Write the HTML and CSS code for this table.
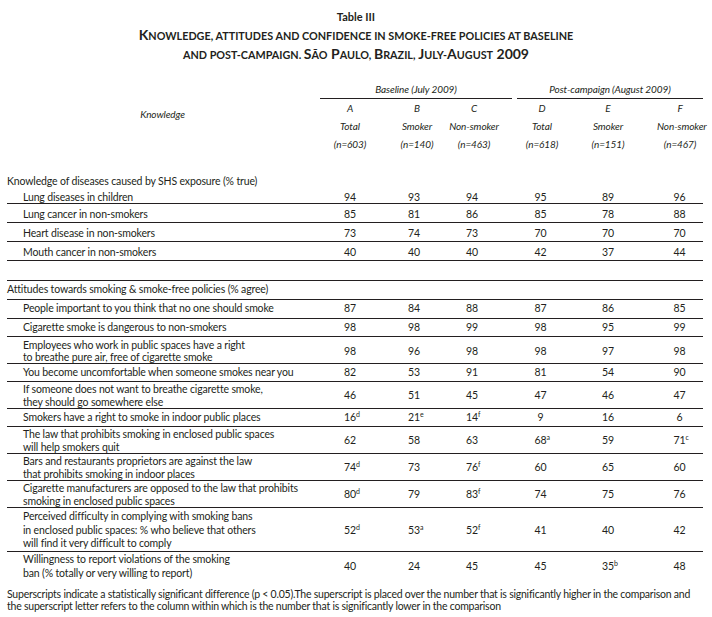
FILE: index.html
```html
<!DOCTYPE html>
<html lang="en">
<head>
<meta charset="utf-8">
<title>Table III</title>
<link rel="stylesheet" href="styles.css">
</head>
<body>
<div class="page">
  <div class="caption">
    <div class="table-no">Table III</div>
    <div class="title">K<span class="sc">nowledge, attitudes and confidence in smoke-free policies at baseline</span><br><span class="sc">and post-campaign. </span>S<span class="sc">ão</span> P<span class="sc">aulo, </span>B<span class="sc">razil, </span>J<span class="sc">uly-</span>A<span class="sc">ugust</span> 2009</div>
  </div>
  <table class="data">
    <colgroup>
      <col class="c-label"><col class="c-a"><col class="c-b"><col class="c-c"><col class="c-d"><col class="c-e"><col class="c-f">
    </colgroup>
    <thead>
      <tr class="group-row">
        <th rowspan="4" class="knowledge">Knowledge</th>
        <th colspan="3"><div class="group g-base">Baseline (July 2009)</div></th>
        <th colspan="3"><div class="group g-post">Post-campaign (August 2009)</div></th>
      </tr>
      <tr class="sub"><th>A</th><th>B</th><th>C</th><th>D</th><th>E</th><th>F</th></tr>
      <tr class="sub"><th>Total</th><th>Smoker</th><th>Non-smoker</th><th>Total</th><th>Smoker</th><th>Non-smoker</th></tr>
      <tr class="sub"><th>(n=603)</th><th>(n=140)</th><th>(n=463)</th><th>(n=618)</th><th>(n=151)</th><th>(n=467)</th></tr>
    </thead>
    <tbody>
      <tr class="spacer"><td colspan="7"></td></tr>
      <tr class="section"><td colspan="7">Knowledge of diseases caused by SHS exposure (% true)</td></tr>
      <tr class="row first"><td class="label">Lung diseases in children</td><td>94</td><td>93</td><td>94</td><td>95</td><td>89</td><td>96</td></tr>
      <tr class="row tall"><td class="label">Lung cancer in non-smokers</td><td>85</td><td>81</td><td>86</td><td>85</td><td>78</td><td>88</td></tr>
      <tr class="row tall"><td class="label">Heart disease in non-smokers</td><td>73</td><td>74</td><td>73</td><td>70</td><td>70</td><td>70</td></tr>
      <tr class="row tall"><td class="label">Mouth cancer in non-smokers</td><td>40</td><td>40</td><td>40</td><td>42</td><td>37</td><td>44</td></tr>
      <tr class="gap"><td colspan="7"></td></tr>
      <tr class="section ruled"><td colspan="7">Attitudes towards smoking &amp; smoke-free policies (% agree)</td></tr>
      <tr class="row mid"><td class="label">People important to you think that no one should smoke</td><td>87</td><td>84</td><td>88</td><td>87</td><td>86</td><td>85</td></tr>
      <tr class="row"><td class="label">Cigarette smoke is dangerous to non-smokers</td><td>98</td><td>98</td><td>99</td><td>98</td><td>95</td><td>99</td></tr>
      <tr class="row two low"><td class="label">Employees who work in public spaces have a right<br>to breathe pure air, free of cigarette smoke</td><td>98</td><td>96</td><td>98</td><td>98</td><td>97</td><td>98</td></tr>
      <tr class="row"><td class="label">You become uncomfortable when someone smokes near you</td><td>82</td><td>53</td><td>91</td><td>81</td><td>54</td><td>90</td></tr>
      <tr class="row two"><td class="label">If someone does not want to breathe cigarette smoke,<br>they should go somewhere else</td><td>46</td><td>51</td><td>45</td><td>47</td><td>46</td><td>47</td></tr>
      <tr class="row"><td class="label">Smokers have a right to smoke in indoor public places</td><td>16<sup>d</sup></td><td>21<sup>e</sup></td><td>14<sup>f</sup></td><td>9</td><td>16</td><td>6</td></tr>
      <tr class="row two"><td class="label">The law that prohibits smoking in enclosed public spaces<br>will help smokers quit</td><td>62</td><td>58</td><td>63</td><td>68<sup>a</sup></td><td>59</td><td>71<sup>c</sup></td></tr>
      <tr class="row two"><td class="label">Bars and restaurants proprietors are against the law<br>that prohibits smoking in indoor places</td><td>74<sup>d</sup></td><td>73</td><td>76<sup>f</sup></td><td>60</td><td>65</td><td>60</td></tr>
      <tr class="row two"><td class="label">Cigarette manufacturers are opposed to the law that prohibits<br>smoking in enclosed public spaces</td><td>80<sup>d</sup></td><td>79</td><td>83<sup>f</sup></td><td>74</td><td>75</td><td>76</td></tr>
      <tr class="row three"><td class="label">Perceived difficulty in complying with smoking bans<br>in enclosed public spaces: % who believe that others<br>will find it very difficult to comply</td><td>52<sup>d</sup></td><td>53<sup>a</sup></td><td>52<sup>f</sup></td><td>41</td><td>40</td><td>42</td></tr>
      <tr class="row last"><td class="label">Willingness to report violations of the smoking<br>ban (% totally or very willing to report)</td><td>40</td><td>24</td><td>45</td><td>45</td><td>35<sup>b</sup></td><td>48</td></tr>
    </tbody>
  </table>
  <p class="note">Superscripts indicate a statistically significant difference (p &lt; 0.05).The superscript is placed over the number that is significantly higher in the comparison and<br>the superscript letter refers to the column within which is the number that is significantly lower in the comparison</p>
</div>
</body>
</html>
```
FILE: styles.css
```css
html, body {
  margin: 0;
  padding: 0;
  background: #ffffff;
}

body {
  font-family: Lato, "Open Sans", "Liberation Sans", sans-serif;
  color: #231f20;
}

.page {
  width: 712px;
  padding: 0 0 0 7px;
  box-sizing: border-box;
}

.caption {
  text-align: center;
  padding-top: 8px;
  padding-right: 7px;
}

.table-no {
  font-weight: 700;
  font-size: 11px;
  line-height: 18px;
}

.title {
  font-weight: 700;
  font-size: 14px;
  line-height: 18px;
}

.title .sc {
  font-size: 10.8px;
  text-transform: uppercase;
}

.data {
  margin-top: 16px;
  width: 696px;
  border-collapse: separate;
  border-spacing: 0;
  table-layout: fixed;
  font-size: 10.5px;
  letter-spacing: -0.15px;
}

.c-label { width: 311px; }
.c-a { width: 64px; }
.c-b { width: 64px; }
.c-c { width: 68px; }
.c-d { width: 61px; }
.c-e { width: 66px; }
.c-f { width: 62px; }

.data th {
  font-weight: 400;
  font-style: italic;
  font-size: 10px;
  letter-spacing: -0.1px;
  padding: 0;
  line-height: 18px;
  text-align: center;
  white-space: nowrap;
}

.data th.knowledge {
  vertical-align: middle;
  padding-bottom: 5px;
}

.group {
  border-bottom: 1px solid #231f20;
}

.g-base { margin: 0 2px; }
.g-post { margin: 0 0 0 3px; }

.sub th:nth-child(2) { padding-left: 6px; }
.sub th:nth-child(3) { padding-right: 12px; }
.sub th:nth-child(4) { padding-right: 5px; }
.sub th:nth-child(6) { padding-left: 16px; }

.data td {
  padding: 0;
  text-align: center;
  white-space: nowrap;
}

.spacer td {
  padding-top: 22px;
}

.section td {
  text-align: left;
  line-height: 13px;
}

.section.ruled td {
  line-height: 15px;
  padding-top: 1px;
  padding-bottom: 2px;
  border-bottom: 1px solid #231f20;
}

.gap td {
  padding-top: 19px;
  border-bottom: 1px solid #231f20;
}

/* row geometry: only vertical padding is set per variant */
.row td {
  line-height: 13px;
  padding-top: 2px;
  padding-bottom: 2px;
  border-bottom: 1px solid #231f20;
  vertical-align: middle;
}

.row.tall td {
  padding-top: 4px;
  padding-bottom: 1px;
}

.row.mid td {
  padding-top: 2px;
  padding-bottom: 3px;
}

.row.first td {
  line-height: 11px;
  padding-top: 4px;
  padding-bottom: 0;
}

.row.two td {
  line-height: 12.5px;
  padding-top: 1px;
  padding-bottom: 0;
}

.row.two.low td {
  line-height: 11.5px;
  padding-top: 3px;
  padding-bottom: 0;
}

.row.three td {
  line-height: 13.5px;
  padding-top: 2px;
  padding-bottom: 0;
}

.row.last td {
  border-bottom: none;
  line-height: 14px;
  padding-top: 0;
  padding-bottom: 0;
}

/* horizontal placement of the value columns */
.row td:nth-child(4) { padding-right: 16px; }
.row td:nth-child(5) { padding-right: 8px; }
.row td:nth-child(7) { padding-left: 15px; }

.row td.label {
  text-align: left;
  padding-left: 16px;
}

sup {
  display: inline-block;
  width: 0;
  font-size: 7px;
  line-height: 0;
  vertical-align: baseline;
  transform: translateY(-4px);
  text-align: left;
  letter-spacing: 0;
}

.note {
  margin: 8px 0 0;
  font-size: 10.5px;
  line-height: 12px;
  letter-spacing: -0.23px;
  white-space: nowrap;
}
```
